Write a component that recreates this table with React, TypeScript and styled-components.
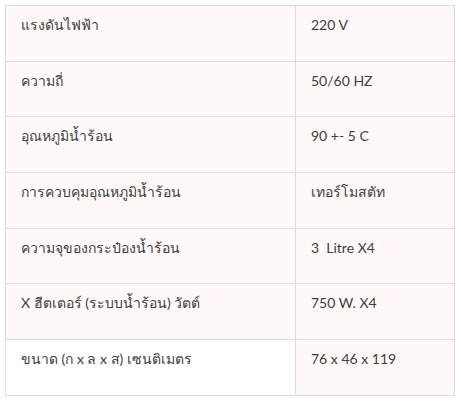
import { createGlobalStyle } from 'styled-components'
import styled from 'styled-components'

const Global = createGlobalStyle`
  body {
    margin: 0;
    background: #fff;
    font-family: Lato, "Noto Sans", "DejaVu Sans", sans-serif;
  }
`

const Page = styled.div`
  padding: 5px;
`

const Table = styled.table`
  width: 450px;
  border-collapse: collapse;
  background: #fff8f8;
  border: 1px solid #dcdcdc;
`

const Row = styled.tr`
  height: 55.7px;
`

const Cell = styled.td<{ $plain?: boolean; $width?: number }>`
  border: 1px solid #dcdcdc;
  vertical-align: top;
  padding: 7px 15px 0;
  font-size: 14px;
  line-height: 24px;
  color: #404040;
  white-space: pre;
  width: ${p => (p.$width ? `${p.$width}px` : 'auto')};
  background: ${p => (p.$plain ? '#fff' : 'transparent')};
`

const specs: [string, string][] = [
  ['แรงดันไฟฟ้า', '220 V'],
  ['ความถี่', '50/60 HZ'],
  ['อุณหภูมิน้ำร้อน', '90 +- 5 C'],
  ['การควบคุมอุณหภูมิน้ำร้อน', 'เทอร์โมสตัท'],
  ['ความจุของกระป๋องน้ำร้อน', '3  Litre X4'],
  ['X ฮีตเตอร์ (ระบบน้ำร้อน) วัตต์', '750 W. X4'],
  ['ขนาด (ก x ล x ส) เซนติเมตร', '76 x 46 x 119'],
]

export default function App() {
  return (
    <>
      <Global />
      <Page>
        <Table>
          <tbody>
            {specs.map(([label, value], i) => (
              <Row key={label}>
                <Cell $width={259} $plain={i === specs.length - 1}>{label}</Cell>
                <Cell>{value}</Cell>
              </Row>
            ))}
          </tbody>
        </Table>
      </Page>
    </>
  )
}
